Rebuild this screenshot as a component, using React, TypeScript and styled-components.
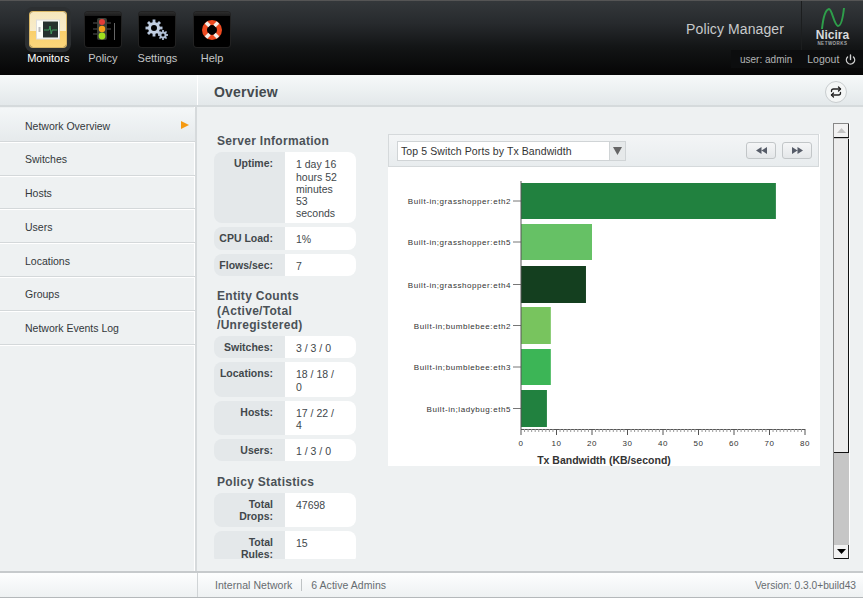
import React from 'react';
import styled, { createGlobalStyle } from 'styled-components';
import { Power, Repeat } from 'lucide-react';

const Global = createGlobalStyle`
  html,body{margin:0;padding:0;background:#eef1f2}
  body{font-family:"Liberation Sans",Arial,sans-serif}
`;

const Page = styled.div`width:863px;height:598px;overflow:hidden;display:flex;flex-direction:column;background:#eef1f2`;

const TopBar = styled.header`height:75px;flex:none;box-sizing:border-box;border-top:1px solid #555;background:linear-gradient(#34383b 0,#272a2d 30%,#131516 62%,#050505 100%);display:flex;justify-content:space-between`;
const NavList = styled.nav`display:flex;padding-left:21px`;
const NavItem = styled.div<{ active?: boolean }>`width:54.6px;display:flex;flex-direction:column;align-items:center;padding-top:11px;font-size:11px;color:${({active})=>active?'#fff':'#c4c6c7'}`;
const Tile = styled.div<{ active?: boolean }>`width:36px;height:35px;box-sizing:border-box;border-radius:3px;display:flex;align-items:center;justify-content:center;background:${({active})=>active?'linear-gradient(#f6e7bd 0,#f8eccb 54%,#f9cf6b 55%,#fbd67c 100%)':'linear-gradient(#2c2c2c 0,#1d1d1d 10%,#000 11%,#000 100%)'};box-shadow:${({active})=>active?'0 0 0 1px #d9b767,0 0 0 5px #2c2f31':'0 0 0 1px #222'}`;
const NavLabel = styled.span`margin-top:5px;line-height:13px`;

const TopRight = styled.div`display:flex;flex-direction:column;align-items:flex-end`;
const BrandRow = styled.div`display:flex;height:49px;align-items:stretch`;
const AppTitle = styled.div`font-size:14px;color:#c8cacb;line-height:56px;padding-right:17px;letter-spacing:.1px`;
const LogoBox = styled.div`width:62px;box-sizing:border-box;border-left:1px solid #1c1e1f;padding-top:6px;display:flex;flex-direction:column;align-items:center`;
const LogoName = styled.span`font-size:12px;font-weight:700;color:#d8dadb;line-height:11px;margin-top:0`;
const LogoSub = styled.span`font-size:4.5px;font-weight:700;color:#a5a8aa;letter-spacing:.5px;line-height:5px`;
const UserBar = styled.div`width:132px;height:18px;box-sizing:border-box;background:#0c0d0e;display:flex;align-items:center;font-size:10px;color:#b3b5b6;padding-left:9px`;
const LogoutLink = styled.span`margin-left:15px;display:flex;align-items:center;gap:6px;font-size:10.5px`;

const SubBar = styled.div`height:32px;flex:none;box-sizing:border-box;border-bottom:2px solid #d5dadc;background:linear-gradient(#f6f9f9,#e3e8ea);display:flex`;
const SubLeft = styled.div`width:197px;flex:none;border-right:1px solid #fff`;
const SubMain = styled.div`flex:1;display:flex;align-items:center;justify-content:space-between;padding:3px 16px 0 16px`;
const PageTitle = styled.h1`margin:0;font-size:14px;font-weight:700;color:#444a4e;letter-spacing:.2px`;
const RoundButton = styled.div`width:22px;height:22px;box-sizing:border-box;border-radius:50%;border:1px solid #c9cdcf;background:#f4f6f6;display:flex;align-items:center;justify-content:center;color:#222`;

const Body = styled.div`flex:1;display:flex;min-height:0`;
const Sidebar = styled.aside`width:197px;flex:none;box-sizing:border-box;border-right:2px solid #d6dadc;box-shadow:inset -1px 0 0 #fff;background:#eef1f2;padding-top:1px`;
const SideItem = styled.div<{ active?: boolean }>`height:33.8px;box-sizing:border-box;border-bottom:1px solid #d4d8da;box-shadow:0 1px 0 #fff;display:flex;align-items:center;justify-content:space-between;padding:${({active})=>active?4:2}px 6px 0 25px;font-size:10.5px;color:#33383b;background:${({active})=>active?'linear-gradient(#f4f7f8,#e6eaec)':'transparent'}`;
const Arrow = styled.i`width:0;height:0;border-left:8px solid #f59a12;border-top:4.5px solid transparent;border-bottom:4.5px solid transparent;margin-top:-3px`;

const Main = styled.main`flex:1;min-width:0;display:flex;padding:16px 15px 12px 17px;gap:32px;position:relative`;
const StatsCol = styled.div`width:142px;flex:none;height:100%;overflow:hidden;padding-top:11px;box-sizing:border-box`;
const SectionTitle = styled.h3`margin:0 0 4px 3px;font-size:12px;line-height:14.3px;font-weight:700;color:#4b5157;letter-spacing:.3px`;
const Group = styled.div`margin-bottom:13.5px`;
const StatRow = styled.div`display:flex;margin-bottom:4px;border-radius:8px;overflow:hidden`;
const StatLabel = styled.div`width:71px;flex:none;box-sizing:border-box;background:#e4e8ea;padding:5px 12px 4px 4px;text-align:right;font-size:10.5px;line-height:12.2px;font-weight:700;color:#41474b`;
const StatValue = styled.div`flex:1;min-width:0;background:#fff;padding:6px 15px 4px 11px;font-size:10.5px;line-height:12.2px;color:#41474b`;

const ChartPanel = styled.section`width:432px;flex:none;align-self:flex-start;margin-top:11px;background:#fff`;
const ChartBar = styled.div`height:33px;box-sizing:border-box;border:1px solid #d5d9db;background:linear-gradient(#f3f5f6,#e8ecee);display:flex;align-items:center;justify-content:space-between;padding:0 6px 0 8px;margin-right:1px`;
const Select = styled.div`width:229px;height:20px;box-sizing:border-box;border:1px solid #d0d4d6;background:#fff;display:flex;align-items:center;justify-content:space-between;padding-left:3px;font-size:10.5px;letter-spacing:.1px;color:#333`;
const SelectArrow = styled.span`width:15px;height:18px;background:#e6e9ea;border-left:1px solid #d0d4d6;display:flex;align-items:center;justify-content:center`;
const Pager = styled.div`display:flex;gap:6px`;
const PageButton = styled.div`width:30px;height:17px;box-sizing:border-box;border:1px solid #c2c6c8;border-radius:3px;background:linear-gradient(#f5f6f7,#e4e7e9);display:flex;align-items:center;justify-content:center`;

const ScrollTrack = styled.div`width:16px;flex:none;height:436px;margin-left:-19px;box-sizing:border-box;border-left:1px solid #888;border-top:1px solid #888;box-shadow:1px 0 0 #fff;display:flex;flex-direction:column;background:#c6c6c6`;
const ScrollEnd = styled.div`height:14px;flex:none;background:#f2f2f2;display:flex;align-items:center;justify-content:center;box-sizing:border-box;border-right:1px solid #333;border-bottom:1px solid #111`;
const ScrollThumb = styled.div`height:314px;flex:none;margin-top:1px;box-sizing:border-box;background:#ededed;border-right:1px solid #111;border-bottom:1px solid #111`;
const ScrollGap = styled.div`flex:1`;

const Footer = styled.footer`height:27px;flex:none;box-sizing:border-box;border-top:2px solid #c6cacc;border-bottom:1px solid #b4b8ba;background:linear-gradient(#fdfefe,#eef1f2);display:flex;font-size:10.5px;color:#666c70`;
const FootLeft = styled.div`width:197px;flex:none;border-right:1px solid #d0d4d6`;
const FootMain = styled.div`flex:1;display:flex;align-items:center;justify-content:space-between;padding:0 7px 0 17px`;
const FootStatus = styled.div`display:flex;align-items:center;letter-spacing:.05px`;
const FootSep = styled.span`width:1px;height:12px;background:#bfc3c5;margin:0 9px 0 9px`;
const FootVersion = styled.span`font-size:10.2px`;

const bars = [
  { name: 'Built-in;grasshopper:eth2', y: 16, h: 36, v: 71.8, c: '#21813f' },
  { name: 'Built-in;grasshopper:eth5', y: 57, h: 36, v: 20, c: '#66c165' },
  { name: 'Built-in;grasshopper:eth4', y: 99, h: 37, v: 18.3, c: '#143f1f' },
  { name: 'Built-in;bumblebee:eth2', y: 140, h: 37, v: 8.4, c: '#78c45e' },
  { name: 'Built-in;bumblebee:eth3', y: 182, h: 36, v: 8.4, c: '#3cb556' },
  { name: 'Built-in;ladybug:eth5', y: 223, h: 37, v: 7.3, c: '#21813f' },
];
const X0 = 133;
const UNIT = 3.55;

function Chart() {
  return (
    <svg width="432" height="299" style={{ display: 'block' }} fontFamily='"Liberation Sans",sans-serif' fill="#333">
      {bars.map(b => (
        <g key={b.name}>
          <rect x={X0} y={b.y} width={b.v * UNIT} height={b.h} fill={b.c} />
          <line x1={X0 - 8} x2={X0} y1={b.y + b.h / 2} y2={b.y + b.h / 2} stroke="#777" />
          <text x={X0 - 10} y={b.y + b.h / 2 + 3} textAnchor="end" fontSize="8" letterSpacing=".57">{b.name}</text>
        </g>
      ))}
      <line x1={X0} x2={X0} y1={14} y2={262} stroke="#555" />
      <line x1={X0} x2={X0 + 284} y1={262.5} y2={262.5} stroke="#555" />
      {Array.from({ length: 81 }, (_, i) => (
        <line key={i} x1={X0 + i * UNIT} x2={X0 + i * UNIT} y1={262} y2={i % 10 === 0 ? 268 : 265} stroke={i % 10 === 0 ? '#555' : '#999'} />
      ))}
      {Array.from({ length: 9 }, (_, i) => (
        <text key={i} x={X0 + i * 10 * UNIT} y={279} textAnchor="middle" fontSize="8" letterSpacing=".6">{i * 10}</text>
      ))}
      <text x={216} y={297} textAnchor="middle" fontSize="10.500" fontWeight="700">Tx Bandwidth (KB/second)</text>
    </svg>
  );
}

function MonitorIcon() {
  return (
    <svg width="24" height="22" viewBox="0 0 24 22">
      <rect x="0.5" y="1" width="23" height="19" fill="#fdfdf8" stroke="#ddd" />
      <rect x="7" y="2.500" width="15" height="16" fill="#26302e" />
      <rect x="2.500" y="8" width="2" height="5" fill="#bbb" />
      <path d="M8 11h5l1-4 1.200 8 1-4h5" fill="none" stroke="#3f9a5c" />
    </svg>
  );
}

function LightIcon() {
  return (
    <svg width="26" height="24" viewBox="0 0 26 24">
      <rect x="7" y="0" width="10" height="22" rx="2" fill="#3a3f38" />
      <path d="M3 5h4M3 11h4M3 16h4M17 5h4M17 11h4" stroke="#555" />
      <circle cx="12" cy="4" r="3" fill="#e23d37" />
      <circle cx="12" cy="11" r="3.200" fill="#f5a11b" />
      <circle cx="12" cy="18" r="3.400" fill="#9ee01f" />
      <line x1="24.500" y1="5" x2="24.500" y2="22" stroke="#666" />
    </svg>
  );
}

function GearIcon() {
  const teeth = (cx: number, cy: number, r: number, n: number) =>
    Array.from({ length: n }, (_, i) => {
      const a = (i * Math.PI * 2) / n;
      return <line key={i} x1={cx} y1={cy} x2={cx + Math.cos(a) * r} y2={cy + Math.sin(a) * r} stroke="#b7c6dc" strokeWidth={r / 3} />;
    });
  return (
    <svg width="24" height="22" viewBox="0 0 24 22">
      {teeth(9, 9, 8.5, 8)}
      <circle cx="9" cy="9" r="6" fill="#c3d0e2" />
      <circle cx="9" cy="9" r="3" fill="#000" />
      {teeth(18, 16, 5, 8)}
      <circle cx="18" cy="16" r="3.600" fill="#aebdd2" />
      <circle cx="18" cy="16" r="1.600" fill="#000" />
    </svg>
  );
}

function BuoyIcon() {
  return (
    <svg width="22" height="22" viewBox="0 0 22 22">
      <circle cx="11" cy="11" r="7.500" fill="none" stroke="#ee4a20" strokeWidth="5" />
      <path d="M5 3.500l3.500 3.500M17 3.500l-3.500 3.500M5 18.500l3.500-3.500M17 18.500l-3.500-3.500" stroke="#f4eee8" strokeWidth="3.500" />
    </svg>
  );
}

function StatTable({ rows }: { rows: [string, string][] }) {
  return (
    <>
      {rows.map(([k, v]) => (
        <StatRow key={k}>
          <StatLabel>{k}</StatLabel>
          <StatValue>{v}</StatValue>
        </StatRow>
      ))}
    </>
  );
}

const nav = [
  { label: 'Monitors', icon: <MonitorIcon />, active: true },
  { label: 'Policy', icon: <LightIcon /> },
  { label: 'Settings', icon: <GearIcon /> },
  { label: 'Help', icon: <BuoyIcon /> },
];
const sideItems = ['Network Overview', 'Switches', 'Hosts', 'Users', 'Locations', 'Groups', 'Network Events Log'];

export default function App() {
  return (
    <Page>
      <Global />
      <TopBar>
        <NavList>
          {nav.map(n => (
            <NavItem key={n.label} active={n.active}>
              <Tile active={n.active}>{n.icon}</Tile>
              <NavLabel>{n.label}</NavLabel>
            </NavItem>
          ))}
        </NavList>
        <TopRight>
          <BrandRow>
            <AppTitle>Policy Manager</AppTitle>
            <LogoBox>
              <svg width="26" height="23" viewBox="0 0 26 23">
                <path d="M2 22C3 12 5 3 9 2c3 0 5 16 9 17 3 0 5-9 6-18" fill="none" stroke="#2e9e4a" strokeWidth="2" />
              </svg>
              <LogoName>Nicira</LogoName>
              <LogoSub>NETWORKS</LogoSub>
            </LogoBox>
          </BrandRow>
          <UserBar>
            user: admin
            <LogoutLink>Logout <Power size={11} strokeWidth={3} color="#d0d0d0" /></LogoutLink>
          </UserBar>
        </TopRight>
      </TopBar>
      <SubBar>
        <SubLeft />
        <SubMain>
          <PageTitle>Overview</PageTitle>
          <RoundButton><Repeat size={12} strokeWidth={2.6} /></RoundButton>
        </SubMain>
      </SubBar>
      <Body>
        <Sidebar>
          {sideItems.map((s, i) => (
            <SideItem key={s} active={i === 0}>{s}{i === 0 && <Arrow />}</SideItem>
          ))}
        </Sidebar>
        <Main>
          <StatsCol>
            <Group>
              <SectionTitle>Server Information</SectionTitle>
              <StatTable rows={[['Uptime:', '1 day 16 hours 52 minutes 53 seconds'], ['CPU Load:', '1%'], ['Flows/sec:', '7']]} />
            </Group>
            <Group>
              <SectionTitle>Entity Counts (Active/Total /Unregistered)</SectionTitle>
              <StatTable rows={[['Switches:', '3 / 3 / 0'], ['Locations:', '18 / 18 / 0'], ['Hosts:', '17 / 22 / 4'], ['Users:', '1 / 3 / 0']]} />
            </Group>
            <Group>
              <SectionTitle>Policy Statistics</SectionTitle>
              <StatTable rows={[['Total Drops:', '47698'], ['Total Rules:', '15']]} />
            </Group>
          </StatsCol>
          <ChartPanel>
            <ChartBar>
              <Select>
                Top 5 Switch Ports by Tx Bandwidth
                <SelectArrow>
                  <svg width="9" height="8" viewBox="0 0 9 8"><path d="M0 0h9L4.500 8z" fill="#666" /></svg>
                </SelectArrow>
              </Select>
              <Pager>
                <PageButton>
                  <svg width="11" height="7" viewBox="0 0 11 7"><path d="M5.500 0v7L0 3.500zM11 0v7L5.500 3.500z" fill="#565c68" /></svg>
                </PageButton>
                <PageButton>
                  <svg width="11" height="7" viewBox="0 0 11 7"><path d="M0 0v7l5.500-3.500zM5.500 0v7L11 3.500z" fill="#565c68" /></svg>
                </PageButton>
              </Pager>
            </ChartBar>
            <Chart />
          </ChartPanel>
          <ScrollTrack>
            <ScrollEnd>
              <svg width="9" height="5" viewBox="0 0 9 5"><path d="M0 5h9L4.500 0z" fill="#c4c4c4" /></svg>
            </ScrollEnd>
            <ScrollThumb />
            <ScrollGap />
            <ScrollEnd>
              <svg width="9" height="5" viewBox="0 0 9 5"><path d="M0 0h9L4.500 5z" fill="#000" /></svg>
            </ScrollEnd>
          </ScrollTrack>
        </Main>
      </Body>
      <Footer>
        <FootLeft />
        <FootMain>
          <FootStatus>Internal Network<FootSep />6 Active Admins</FootStatus>
          <FootVersion>Version: 0.3.0+build43</FootVersion>
        </FootMain>
      </Footer>
    </Page>
  );
}
